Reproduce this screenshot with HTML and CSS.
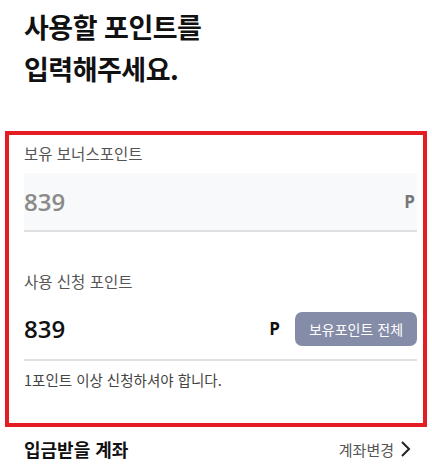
FILE: index.html
```html
<!DOCTYPE html>
<html lang="ko">
<head>
<meta charset="UTF-8">
<meta name="viewport" content="width=device-width, initial-scale=1.0">
<title>포인트 사용</title>
<link rel="stylesheet" href="styles.css">
</head>
<body>
<h1 class="title">사용할 포인트를<br>입력해주세요.</h1>

<div class="pointBox">
  <p class="label">보유 보너스포인트</p>
  <div class="field fieldReadonly">
    <span class="amount">839</span>
    <span class="unit">P</span>
  </div>

  <p class="label labelSecond">사용 신청 포인트</p>
  <div class="field fieldInput">
    <span class="amount">839</span>
    <span class="unit">P</span>
    <button class="allButton">보유포인트 전체</button>
  </div>
  <p class="hint">1포인트 이상 신청하셔야 합니다.</p>
</div>

<div class="accountRow">
  <h2>입금받을 계좌</h2>
  <a class="changeLink" href="#">계좌변경
    <svg width="12" height="18" viewBox="0 0 12 18"><path d="M2 2l7 7-7 7" fill="none" stroke="#222" stroke-width="2"/></svg>
  </a>
</div>
</body>
</html>
```

FILE: styles.css
```css
body {
  margin: 0;
  font-family: "Noto Sans CJK KR", "Noto Sans", sans-serif;
  color: #111;
  background: #fff;
}

.title {
  margin: 0;
  padding: 6px 24px 0;
  font-size: 27px;
  line-height: 42px;
  font-weight: 700;
  letter-spacing: -0.5px;
}

.pointBox {
  margin: 41px 5px 0;
  height: 288px;
  border: 4px solid #e41c24;
  padding: 0 6px 0 15px;
}

.label {
  margin: 5px 0 0;
  font-size: 15.5px;
  line-height: 26px;
  color: #555;
}

.labelSecond {
  margin-top: 36px;
}

.field {
  display: flex;
  align-items: center;
  border-bottom: 2px solid #e0e0e0;
}

.fieldReadonly {
  margin-top: 7px;
  height: 57px;
  background: #f8f9fa;
  padding-right: 2px;
}

.fieldReadonly .amount {
  color: #8a8a8a;
}

.fieldReadonly .unit {
  color: #777;
}

.fieldInput {
  margin-top: 18px;
  height: 47px;
  align-items: flex-start;
}

.amount {
  flex: 1;
  font-family: "Open Sans", "Noto Sans", sans-serif;
  font-size: 24px;
  font-weight: 600;
}

.fieldInput .amount {
  line-height: 34px;
}

.unit {
  font-family: "Open Sans", "Noto Sans", sans-serif;
  font-size: 17px;
  font-weight: 700;
}

.fieldInput .unit {
  line-height: 34px;
  margin-right: 15px;
}

.allButton {
  height: 34px;
  width: 122px;
  border: none;
  border-radius: 7px;
  background: #858ca8;
  color: #fff;
  font-family: "Noto Sans CJK KR", sans-serif;
  font-size: 14px;
  padding: 0;
}

.hint {
  margin: 9px 0 0;
  font-size: 14.5px;
  line-height: 20px;
  color: #444;
}

.accountRow {
  display: flex;
  align-items: center;
  justify-content: space-between;
  padding: 8px 20px 0 24px;
}

.accountRow h2 {
  margin: 0;
  font-size: 18px;
  font-weight: 700;
  line-height: 28px;
}

.changeLink {
  display: flex;
  align-items: center;
  gap: 6px;
  color: #555;
  text-decoration: none;
  font-size: 15px;
}
```
